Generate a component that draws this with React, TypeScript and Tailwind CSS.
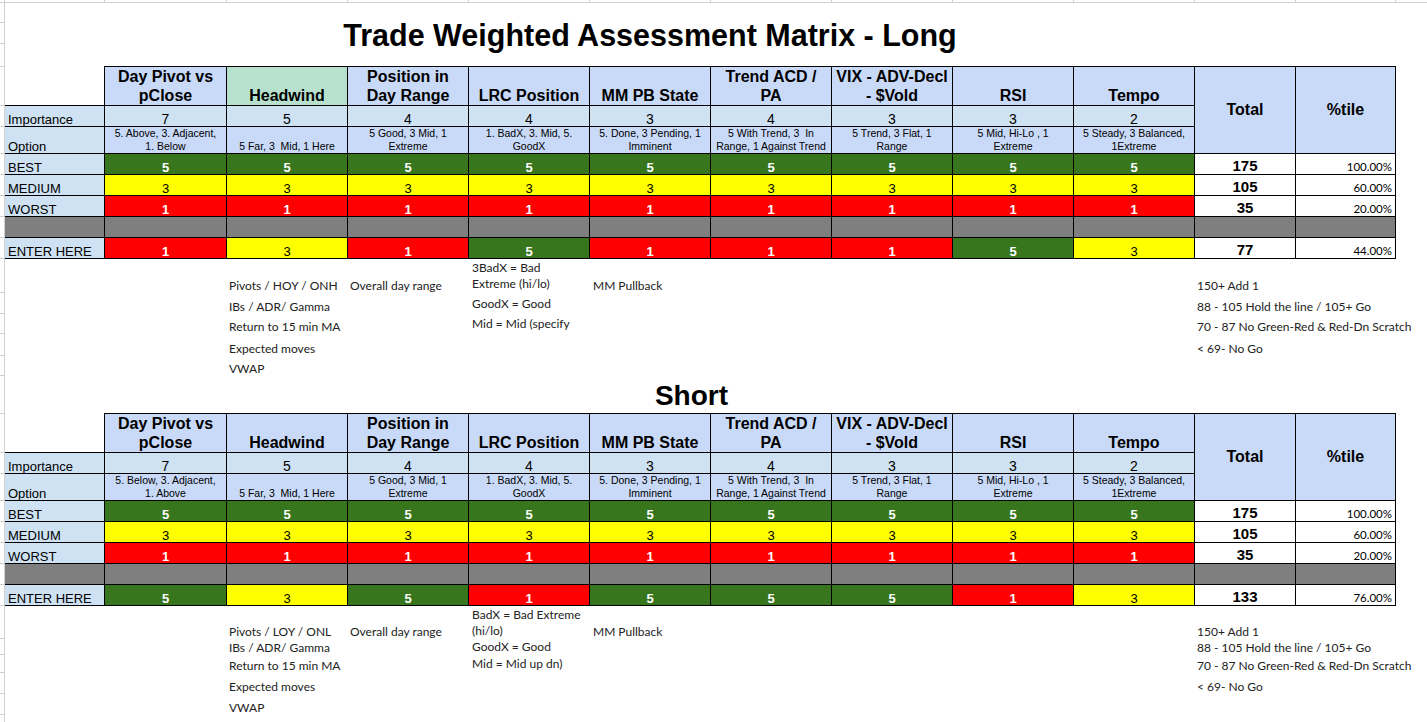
type Tone = "g" | "y" | "r";

const COLS =
  "grid grid-cols-[100px_122px_121px_121px_121px_121px_121px_121px_121px_121px_101px_100px]";
const GRID_LINE = "border-[#d0d0d0]";
const NOTE_FONT = "font-['Lato','Open_Sans',sans-serif]";

const TONE: Record<Tone, { cls: string; value: number }> = {
  g: { cls: "bg-[#38761d] text-white font-bold", value: 5 },
  y: { cls: "bg-[#ffff00] text-black", value: 3 },
  r: { cls: "bg-[#ff0000] text-white font-bold", value: 1 },
};

const HEADERS = [
  ["Day Pivot vs", "pClose"],
  ["Headwind"],
  ["Position in", "Day Range"],
  ["LRC Position"],
  ["MM PB State"],
  ["Trend ACD /", "PA"],
  ["VIX - ADV-Decl", "- $Vold"],
  ["RSI"],
  ["Tempo"],
];

const IMPORTANCE = [7, 5, 4, 4, 3, 4, 3, 3, 2];

const SHARED_OPTIONS = [
  ["5 Far, 3 \u00a0Mid, 1 Here"],
  ["5 Good, 3 Mid, 1", "Extreme"],
  ["1. BadX, 3. Mid, 5.", "GoodX"],
  ["5. Done, 3 Pending, 1", "Imminent"],
  ["5 With Trend, 3 \u00a0In", "Range, 1 Against Trend"],
  ["5 Trend, 3 Flat, 1", "Range"],
  ["5 Mid, Hi-Lo , 1", "Extreme"],
  ["5 Steady, 3 Balanced,", "1Extreme"],
];

const SCALE_ROWS: { label: string; tone: Tone; total: number; pct: string }[] = [
  { label: "BEST", tone: "g", total: 175, pct: "100.00%" },
  { label: "MEDIUM", tone: "y", total: 105, pct: "60.00%" },
  { label: "WORST", tone: "r", total: 35, pct: "20.00%" },
];

// row heights of the sheet, used for the row-number gutter ticks
const GUTTER_ROWS = [
  "h-[3px]", "h-[20px]", "h-[21px]", "h-[23px]",
  "h-[39px]", "h-[21px]", "h-[27px]", "h-[21px]", "h-[21px]", "h-[21px]", "h-[21px]", "h-[21px]",
  "h-[34px]", "h-[21px]", "h-[20px]", "h-[22px]", "h-[20px]", "h-[38px]",
  "h-[39px]", "h-[21px]", "h-[27px]", "h-[21px]", "h-[21px]", "h-[21px]", "h-[21px]", "h-[21px]",
  "h-[33px]", "h-[16px]", "h-[18px]", "h-[21px]", "h-[21px]",
];

const CELL = "border-r border-b border-black";
const LABEL = `${CELL} flex items-end pl-[3px] bg-[#cfe2f3] text-[13px] leading-[13px]`;
const VALUE = `${CELL} flex items-end justify-center text-[13px] leading-[13px]`;
const TOTAL = `${CELL} flex items-end justify-center bg-white text-[15px] font-bold leading-[17px]`;
const PCT = `${CELL} ${NOTE_FONT} flex items-end justify-end pr-[3px] bg-white text-[11.5px] leading-[14px]`;

type MatrixProps = {
  headwindBg: string;
  pivotOption: string[];
  enter: Tone[];
  total: number;
  pct: string;
};

function Matrix({ headwindBg, pivotOption, enter, total, pct }: MatrixProps) {
  const options = [pivotOption, ...SHARED_OPTIONS];

  return (
    <div className={`${COLS} grid-rows-[40px_21px_27px_21px_21px_21px_21px_21px]`}>
      <div className={`${CELL} bg-white`} />
      {HEADERS.map((lines, index) => (
        <div
          className={`${CELL} flex items-end justify-center border-t text-center text-[16px] font-bold leading-[19px] ${
            index === 1 ? headwindBg : "bg-[#c9daf8]"
          }`}
          key={lines[0]}
        >
          <div>
            {lines.map((line) => (
              <div key={line}>{line}</div>
            ))}
          </div>
        </div>
      ))}
      <div className={`${CELL} row-span-3 flex items-center justify-center border-t bg-[#c9daf8] text-[16px] font-bold`}>
        Total
      </div>
      <div className={`${CELL} row-span-3 flex items-center justify-center border-t bg-[#c9daf8] text-[16px] font-bold`}>
        %tile
      </div>

      <div className={LABEL}>Importance</div>
      {IMPORTANCE.map((value, index) => (
        <div
          className={`${CELL} flex items-end justify-center bg-[#cfe2f3] text-[14px] leading-[14px]`}
          key={index}
        >
          {value}
        </div>
      ))}

      <div className={LABEL}>Option</div>
      {options.map((lines, index) => (
        <div
          className={`${CELL} flex items-end justify-center bg-[#c9daf8] text-center text-[10.5px] leading-[13px]`}
          key={index}
        >
          <div>
            {lines.map((line) => (
              <div key={line}>{line}</div>
            ))}
          </div>
        </div>
      ))}

      {SCALE_ROWS.map((row) => (
        <div className="contents" key={row.label}>
          <div className={LABEL}>{row.label}</div>
          {IMPORTANCE.map((_, index) => (
            <div className={`${VALUE} ${TONE[row.tone].cls}`} key={index}>
              {TONE[row.tone].value}
            </div>
          ))}
          <div className={TOTAL}>{row.total}</div>
          <div className={PCT}>{row.pct}</div>
        </div>
      ))}

      {Array.from({ length: 12 }).map((_, index) => (
        <div className={`${CELL} bg-[#7f7f7f]`} key={index} />
      ))}

      <div className={LABEL}>ENTER HERE</div>
      {enter.map((tone, index) => (
        <div className={`${VALUE} ${TONE[tone].cls}`} key={index}>
          {TONE[tone].value}
        </div>
      ))}
      <div className={TOTAL}>{total}</div>
      <div className={PCT}>{pct}</div>
    </div>
  );
}

const NOTE = "flex items-end whitespace-nowrap";
const NOTE_MID = "flex items-center whitespace-nowrap leading-[16px]";

function LongNotes() {
  return (
    <div className={`${COLS} ${NOTE_FONT} grid-rows-[34px_21px_20px_22px_20px] text-[12px] leading-[15px] text-[#222]`}>
      <div className={`${NOTE} col-start-3 row-start-1 pl-[2px]`}>Pivots / HOY / ONH</div>
      <div className={`${NOTE} col-start-3 row-start-2 pl-[2px]`}>IBs / ADR/ Gamma</div>
      <div className={`${NOTE} col-start-3 row-start-3 pl-[2px]`}>Return to 15 min MA</div>
      <div className={`${NOTE} col-start-3 row-start-4 pl-[2px]`}>Expected moves</div>
      <div className={`${NOTE} col-start-3 row-start-5 pl-[2px]`}>VWAP</div>
      <div className={`${NOTE} col-start-4 row-start-1 pl-[2px]`}>Overall day range</div>
      <div className={`${NOTE_MID} col-start-5 row-start-1 pl-[3px]`}>
        <div>
          <div>3BadX = Bad</div>
          <div>Extreme (hi/lo)</div>
        </div>
      </div>
      <div className={`${NOTE_MID} col-start-5 row-start-2 pl-[3px]`}>GoodX = Good</div>
      <div className={`${NOTE_MID} col-start-5 row-start-3 pl-[3px]`}>Mid = Mid (specify</div>
      <div className={`${NOTE} col-start-6 row-start-1 pl-[3px]`}>MM Pullback</div>
      <div className={`${NOTE} col-start-11 row-start-1 pl-[2px]`}>150+ Add 1</div>
      <div className={`${NOTE} col-start-11 row-start-2 pl-[2px]`}>88 - 105 Hold the line / 105+ Go</div>
      <div className={`${NOTE} col-start-11 row-start-3 pl-[2px]`}>70 - 87 No Green-Red &amp; Red-Dn Scratch</div>
      <div className={`${NOTE} col-start-11 row-start-4 pl-[2px]`}>&lt; 69- No Go</div>
    </div>
  );
}

function ShortNotes() {
  return (
    <div className={`${COLS} ${NOTE_FONT} grid-rows-[33px_16px_18px_21px_21px] text-[12px] leading-[15px] text-[#222]`}>
      <div className={`${NOTE} col-start-3 row-start-1 pl-[2px]`}>Pivots / LOY / ONL</div>
      <div className={`${NOTE} col-start-3 row-start-2 pl-[2px]`}>IBs / ADR/ Gamma</div>
      <div className={`${NOTE} col-start-3 row-start-3 pl-[2px]`}>Return to 15 min MA</div>
      <div className={`${NOTE} col-start-3 row-start-4 pl-[2px]`}>Expected moves</div>
      <div className={`${NOTE} col-start-3 row-start-5 pl-[2px]`}>VWAP</div>
      <div className={`${NOTE} col-start-4 row-start-1 pl-[2px]`}>Overall day range</div>
      <div className={`${NOTE_MID} col-start-5 row-start-1 pl-[3px]`}>
        <div>
          <div>BadX = Bad Extreme</div>
          <div>(hi/lo)</div>
        </div>
      </div>
      <div className={`${NOTE_MID} col-start-5 row-start-2 pl-[3px]`}>GoodX = Good</div>
      <div className={`${NOTE_MID} col-start-5 row-start-3 pl-[3px]`}>Mid = Mid up dn)</div>
      <div className={`${NOTE} col-start-6 row-start-1 pl-[3px]`}>MM Pullback</div>
      <div className={`${NOTE} col-start-11 row-start-1 pl-[2px]`}>150+ Add 1</div>
      <div className={`${NOTE} col-start-11 row-start-2 pl-[2px]`}>88 - 105 Hold the line / 105+ Go</div>
      <div className={`${NOTE} col-start-11 row-start-3 pl-[2px]`}>70 - 87 No Green-Red &amp; Red-Dn Scratch</div>
      <div className={`${NOTE} col-start-11 row-start-4 pl-[2px]`}>&lt; 69- No Go</div>
    </div>
  );
}

export default function App() {
  return (
    <div className="flex h-[722px] w-[1427px] overflow-hidden bg-white font-['Liberation_Sans',Arial,sans-serif] text-black">
      <div className={`flex w-[5px] shrink-0 flex-col border-r ${GRID_LINE}`}>
        {GUTTER_ROWS.map((height, index) => (
          <div className={`${height} shrink-0 border-b ${GRID_LINE}`} key={index} />
        ))}
      </div>

      <div className="flex min-w-0 flex-1 flex-col">
        <div className="flex h-[3px] shrink-0">
          <div className={COLS}>
            {Array.from({ length: 12 }).map((_, index) => (
              <div className={`h-[3px] border-r border-b ${GRID_LINE}`} key={index} />
            ))}
          </div>
          <div className={`flex-1 border-b ${GRID_LINE}`} />
        </div>

        <div className="h-[63px] shrink-0 pt-[15px]">
          <div className="w-[1290px] text-center text-[30.5px] font-bold leading-[34px]">
            Trade Weighted Assessment Matrix - Long
          </div>
        </div>

        <Matrix
          enter={["r", "y", "r", "g", "r", "r", "r", "g", "y"]}
          headwindBg="bg-[#b7e1cd]"
          pct="44.00%"
          pivotOption={["5. Above, 3. Adjacent,", "1. Below"]}
          total={77}
        />

        <LongNotes />

        <div className="h-[37px] shrink-0 pt-[4px]">
          <div className="w-[1373px] text-center text-[28px] font-bold leading-[32px]">
            Short
          </div>
        </div>

        <Matrix
          enter={["g", "y", "g", "r", "g", "g", "g", "r", "y"]}
          headwindBg="bg-[#c9daf8]"
          pct="76.00%"
          pivotOption={["5. Below, 3. Adjacent,", "1. Above"]}
          total={133}
        />

        <ShortNotes />
      </div>
    </div>
  );
}
